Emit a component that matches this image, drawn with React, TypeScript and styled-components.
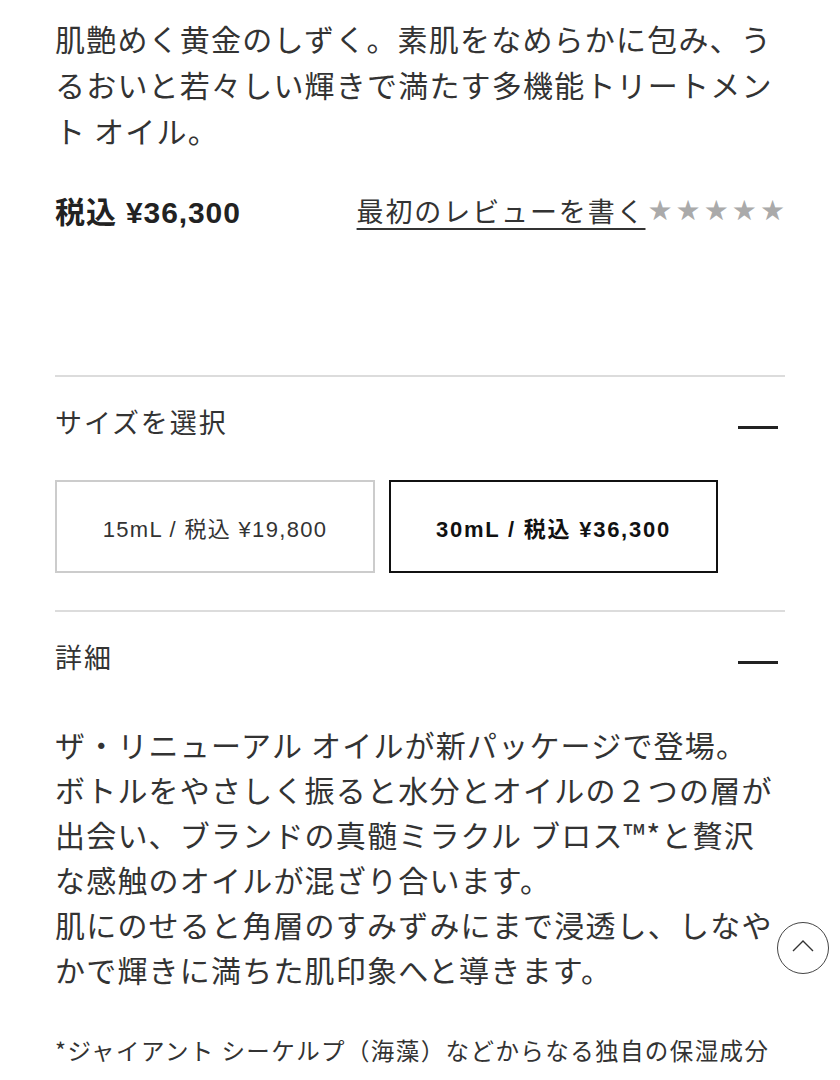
import React from 'react';
import styled, { createGlobalStyle } from 'styled-components';

const GlobalStyle = createGlobalStyle`
  body {
    margin: 0;
    background: #fff;
    color: #333;
    font-family: "Noto Sans CJK JP", "Noto Sans", sans-serif;
  }
`;

const sizes = [
  { label: '15mL / 税込 ¥19,800', selected: false },
  { label: '30mL / 税込 ¥36,300', selected: true },
];

const description = [
  'ザ・リニューアル オイルが新パッケージで登場。',
  'ボトルをやさしく振ると水分とオイルの２つの層が',
  '出会い、ブランドの真髄ミラクル ブロス™*と贅沢',
  'な感触のオイルが混ざり合います。',
  '肌にのせると角層のすみずみにまで浸透し、しなや',
  'かで輝きに満ちた肌印象へと導きます。',
];

const App: React.FC = () => (
  <>
    <GlobalStyle />
    <Page>
      <Intro>
        肌艶めく黄金のしずく。素肌をなめらかに包み、う<br />
        るおいと若々しい輝きで満たす多機能トリートメン<br />
        ト オイル。
      </Intro>
      <PriceRow>
        <Price>税込 ¥36,300</Price>
        <Review>
          <ReviewLink href="#">最初のレビューを書く</ReviewLink>
          <Stars>★★★★★</Stars>
        </Review>
      </PriceRow>

      <Section>
        <SectionHeader>
          <SectionTitle>サイズを選択</SectionTitle>
          <Minus />
        </SectionHeader>
        <SizeList>
          {sizes.map(s => (
            <SizeButton key={s.label} selected={s.selected}>{s.label}</SizeButton>
          ))}
        </SizeList>
      </Section>

      <Section>
        <SectionHeader>
          <SectionTitle>詳細</SectionTitle>
          <Minus />
        </SectionHeader>
        <Description>
          {description.map(line => (
            <React.Fragment key={line}>{line}<br /></React.Fragment>
          ))}
        </Description>
        <Footnote>*ジャイアント シーケルプ（海藻）などからなる独自の保湿成分</Footnote>
      </Section>
    </Page>
    <ScrollTop aria-label="top">
      <svg width="22" height="12" viewBox="0 0 22 12" fill="none">
        <path d="M1 11 L11 1 L21 11" stroke="#333" strokeWidth="1.4" />
      </svg>
    </ScrollTop>
  </>
);
export default App;

const Page = styled.div`
  width: 730px;
  margin: 0 0 0 55px;
  padding-top: 15px;
`;

const Intro = styled.p`
  margin: 0;
  font-size: 30px;
  line-height: 46px;
  letter-spacing: 0.04em;
  color: #333;
  white-space: nowrap;
`;

const PriceRow = styled.div`
  display: flex;
  align-items: center;
  justify-content: space-between;
  height: 46px;
  margin: 34px 0 142px;
`;

const Price = styled.span`
  font-family: "Liberation Sans", "Noto Sans CJK JP", sans-serif;
  font-size: 30px;
  font-weight: 700;
  letter-spacing: 0.03em;
  color: #222;
`;

const Review = styled.div`
  display: flex;
  align-items: center;
  gap: 2px;
`;

const ReviewLink = styled.a`
  font-size: 27px;
  letter-spacing: 0.07em;
  color: #333;
  text-decoration: underline;
  text-underline-offset: 6px;
  text-decoration-thickness: 2px;
`;

const Stars = styled.span`
  font-family: "DejaVu Sans", sans-serif;
  font-size: 28px;
  letter-spacing: 3px;
  margin-right: -3px;
  color: #aaa;
`;

const Section = styled.section`
  border-top: 2px solid #dcdcdc;
`;

const SectionHeader = styled.div`
  display: flex;
  align-items: center;
  justify-content: space-between;
  padding-top: 25px;
  height: 40px;
`;

const SectionTitle = styled.h2`
  margin: 0;
  font-size: 27px;
  line-height: 40px;
  font-weight: 400;
  letter-spacing: 0.07em;
  color: #333;
`;

const Minus = styled.span`
  display: block;
  width: 40px;
  height: 3px;
  margin: 10px 7px 0 0;
  background: #222;
`;

const SizeList = styled.div`
  display: flex;
  gap: 14px;
  padding: 38px 0 37px;
`;

const SizeButton = styled.button<{ selected: boolean }>`
  box-sizing: border-box;
  height: 93px;
  width: ${p => (p.selected ? '329px' : '320px')};
  background: #fff;
  border: 2px solid ${p => (p.selected ? '#111' : '#cccccc')};
  font-family: "Liberation Sans", "Noto Sans CJK JP", sans-serif;
  font-size: 22px;
  font-weight: ${p => (p.selected ? 700 : 400)};
  letter-spacing: ${p => (p.selected ? '0.08em' : '0.06em')};
  color: ${p => (p.selected ? '#111' : '#333')};
  cursor: pointer;
`;

const Description = styled.p`
  margin: 45px 0 0;
  font-size: 30px;
  line-height: 45px;
  letter-spacing: 0.04em;
  color: #333;
  white-space: nowrap;
`;

const Footnote = styled.p`
  margin: 40px 0 0;
  font-size: 23.5px;
  line-height: 36px;
  letter-spacing: 0.06em;
  color: #333;
  white-space: nowrap;
`;

const ScrollTop = styled.button`
  position: fixed;
  left: 777px;
  top: 922px;
  width: 52px;
  height: 52px;
  display: flex;
  align-items: center;
  justify-content: center;
  padding: 0 0 4px;
  border-radius: 50%;
  border: 1px solid #444;
  background: #fff;
  cursor: pointer;
`;
